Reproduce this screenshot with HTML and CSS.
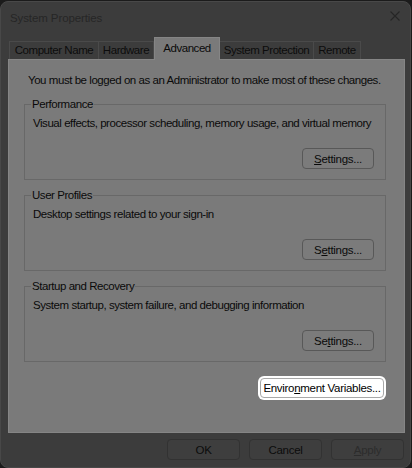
FILE: index.html
```html
<!DOCTYPE html>
<html>
<head>
<link rel="stylesheet" href="styles.css">
</head>
<body>

<div class="window">
  <div class="titlebar">
    <span class="title">System Properties</span>
    <svg class="close" width="10" height="10" viewBox="0 0 10 10">
      <path d="M0.5 0.5 L9.5 9.5 M9.5 0.5 L0.5 9.5" stroke="#262626" stroke-width="1.1" fill="none"/>
    </svg>
  </div>

  <div class="tabs">
    <div class="tab t1">Computer Name</div>
    <div class="tab t2">Hardware</div>
    <div class="tab t3 active">Advanced</div>
    <div class="tab t4">System Protection</div>
    <div class="tab t5">Remote</div>
  </div>

  <div class="panel">
    <p class="notice">You must be logged on as an Administrator to make most of these changes.</p>

    <fieldset class="group">
      <legend>Performance</legend>
      <div class="desc">Visual effects, processor scheduling, memory usage, and virtual memory</div>
      <div class="row"><button class="btn"><u>S</u>ettings...</button></div>
    </fieldset>

    <fieldset class="group">
      <legend>User Profiles</legend>
      <div class="desc">Desktop settings related to your sign-in</div>
      <div class="row"><button class="btn">S<u>e</u>ttings...</button></div>
    </fieldset>

    <fieldset class="group">
      <legend>Startup and Recovery</legend>
      <div class="desc">System startup, system failure, and debugging information</div>
      <div class="row"><button class="btn">Se<u>t</u>tings...</button></div>
    </fieldset>

    <div class="envrow">
      <button class="btn env">Enviro<u>n</u>ment Variables...</button>
    </div>
  </div>

  <div class="footer">
    <button class="fbtn">OK</button>
    <button class="fbtn">Cancel</button>
    <button class="fbtn disabled"><u>A</u>pply</button>
  </div>
</div>

</body>
</html>
```

FILE: styles.css
```css
body {
    margin: 0;
    background-color: #1b1b1b;
    font-family: "Liberation Sans", Arial, sans-serif;
    font-size: 11.5px;
}

/* dialog frame */
.window {
    box-sizing: border-box;
    width: 411px;
    height: 467px;
    margin: 1px 0 0 0;
    background-color: #3c3c3c;
    border: 1px solid #484848;
    border-radius: 8px;
    display: flex;
    flex-direction: column;
    white-space: nowrap;
    letter-spacing: -0.45px;
}

.titlebar {
    height: 30px;
    display: flex;
    align-items: center;
    justify-content: space-between;
    padding: 0 10px 0 9px;
}

.title {
    color: #262626;
    font-size: 11.5px;
    letter-spacing: -0.1px;
    margin-top: 1px;
}

.close {
    margin-top: -2px;
}

/* tab strip */
.tabs {
    height: 22px;
    margin: 5px 0 0 7px;
    display: flex;
    align-items: flex-end;
    position: relative;
    z-index: 1;
}

.tab {
    box-sizing: border-box;
    height: 18px;
    border: 1px solid #4a4a4a;
    border-bottom: none;
    color: #0c0c0c;
    text-align: center;
    line-height: 17px;
}

.tab + .tab {
    border-left: none;
}

.t1 { width: 90px; margin-left: 1px; }
.t2 { width: 55px; }
.t3 { width: 66px; }
.t4 { width: 94px; }
.t5 { width: 47px; }

.tab.active {
    height: 23px;
    margin-bottom: -1px;
    background-color: #7a7a7a;
    border: 1px solid #858585;
    border-bottom: none;
    line-height: 20px;
    color: #0a0a0a;
}

/* tab page */
.panel {
    box-sizing: border-box;
    height: 374px;
    margin: 0 5px 0 7px;
    background-color: #7a7a7a;
    border: 1px solid #858585;
    padding: 13px 18px 0 15px;
    color: #0a0a0a;
}

.notice {
    margin: 0 0 0 4px;
    line-height: 15px;
}

.group {
    box-sizing: border-box;
    min-width: 0;
    height: 83px;
    margin: 9px 0 0 0;
    padding: 0 0 0 6px;
    border: 1px solid #686868;
}

.group + .group {
    margin-top: 8px;
}

.group legend {
    padding: 0 1px;
    line-height: 15px;
}

.desc {
    margin: 4px 0 0 2px;
    line-height: 15px;
}

.row {
    display: flex;
    justify-content: flex-end;
    margin: 17px 11px 0 0;
}

.btn {
    box-sizing: border-box;
    width: 72px;
    height: 21px;
    padding: 0;
    font-family: "Liberation Sans", Arial, sans-serif;
    font-size: 11.5px;
    letter-spacing: -0.3px;
    color: #0a0a0a;
    background-color: #7b7b7b;
    border: 1px solid #585858;
    border-radius: 4px;
}

.envrow {
    display: flex;
    justify-content: flex-end;
    margin: 16px 0 0 0;
}

.btn.env {
    width: 124px;
    height: 20px;
    margin-right: 2px;
    background-color: #ffffff;
    border: 1px solid #a8a8a8;
    box-shadow: 0 0 0 2px #ffffff;
    color: #000000;
}

/* OK / Cancel / Apply */
.footer {
    display: flex;
    justify-content: flex-end;
    gap: 9px;
    margin: 6px 6px 0 0;
}

.fbtn {
    box-sizing: border-box;
    width: 73px;
    height: 21px;
    padding: 0;
    font-family: "Liberation Sans", Arial, sans-serif;
    font-size: 11.5px;
    letter-spacing: -0.3px;
    color: #0c0c0c;
    background-color: #3e3e3e;
    border: 1px solid #323232;
    border-radius: 4px;
}

.fbtn.disabled {
    color: #2c2c2c;
}
```
